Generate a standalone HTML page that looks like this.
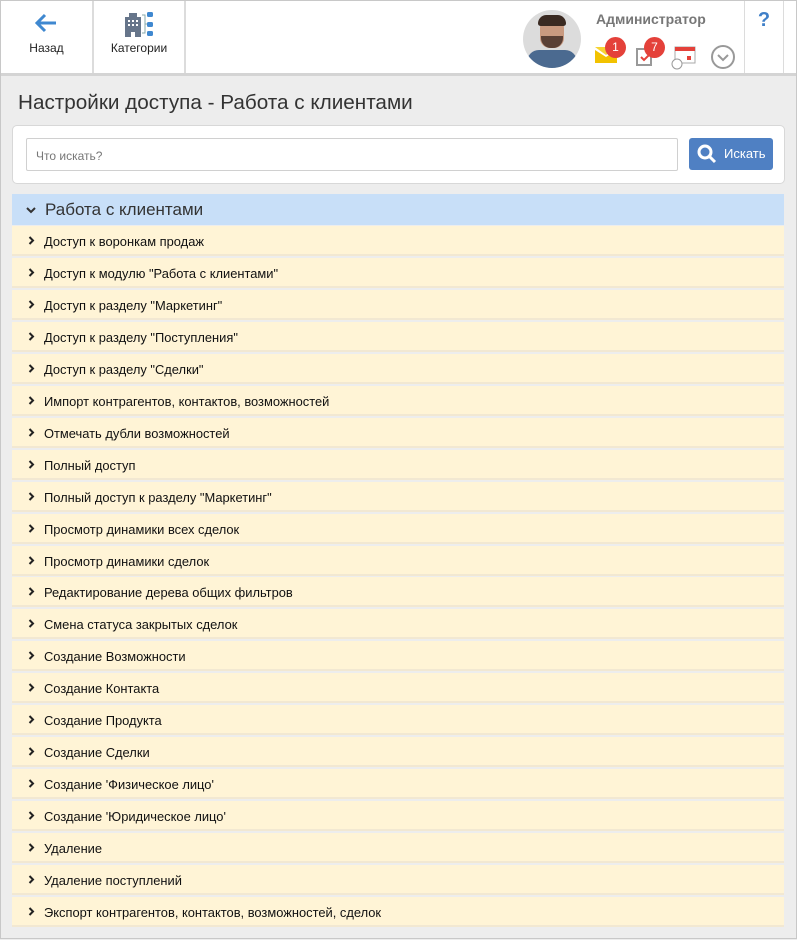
<!DOCTYPE html>
<html><head><meta charset="utf-8"><style>
*{box-sizing:border-box;margin:0;padding:0}
body{width:797px;height:940px;overflow:hidden;background:#ededed;font-family:"Liberation Sans",Arial,sans-serif;position:relative}
.frame{position:absolute;left:0;top:0;width:797px;height:939px;border:1px solid #c8c8c8;}
.top{position:absolute;left:1px;top:1px;width:795px;height:75px;background:#fff;border-bottom:3px solid #d4d4d4}
.cell{position:absolute;top:0;height:72px;border-right:2px solid #dcdcdc;text-align:center;font-size:12px;color:#222}
.title{position:absolute;left:18px;top:91px;font-size:20.7px;color:#333}
.card{position:absolute;left:12px;top:125px;width:773px;height:59px;background:#fff;border:1px solid #d8d8d8;border-radius:5px}
.inp{position:absolute;left:13px;top:12px;width:652px;height:33px;border:1px solid #d0d0d0;border-radius:2px;font-size:12px;color:#777;padding:10px 9px}
.btn{position:absolute;left:676px;top:12px;width:84px;height:32px;background:#4f80c3;border-radius:3px;color:#fff;font-size:13px}
.grp{position:absolute;left:12px;top:194px;width:772px;height:31px;background:#c8dff8;font-size:17px;color:#333;padding:6px 0 0 33px}
.row{position:absolute;left:12px;width:772px;height:30px;background:#fff4d6;border-bottom:2px solid #f2e8d2;font-size:12.9px;color:#111;padding:8px 0 0 32px}
.chev{position:absolute;left:16px;top:10px}
</style></head><body>
<div class="frame"></div>
<div class="top">
 <div class="cell" style="left:0;width:93px">
  <svg style="position:absolute;left:33px;top:12px" width="24" height="20" viewBox="0 0 24 20"><path d="M11 2L3 10l8 8M3 10h19" fill="none" stroke="#3f88d0" stroke-width="3"/></svg>
  <div style="position:absolute;top:40px;width:100%">Назад</div></div>
 <div class="cell" style="left:93px;width:92px">
  <svg style="position:absolute;left:29px;top:10px" width="32" height="26" viewBox="0 0 32 26"><path d="M2 6h4V2h8v4h4v20h-6v-5h-4v5H2z" fill="#66758a"/><g fill="#fff"><rect x="5" y="9" width="2" height="2"/><rect x="9" y="9" width="2" height="2"/><rect x="13" y="9" width="2" height="2"/><rect x="5" y="13" width="2" height="2"/><rect x="9" y="13" width="2" height="2"/><rect x="13" y="13" width="2" height="2"/></g><path d="M19 4h3v18h-3M22 13h4" fill="none" stroke="#8aa" stroke-width="1"/><rect x="24" y="1" width="6" height="5" rx="1.5" fill="#3f88d0"/><rect x="24" y="11" width="6" height="5" rx="1.5" fill="#3f88d0"/><rect x="24" y="20" width="6" height="5" rx="1.5" fill="#3f88d0"/></svg>
  <div style="position:absolute;top:40px;width:100%">Категории</div></div>
 <div style="position:absolute;left:522px;top:9px;width:58px;height:58px;border-radius:50%;background:#dcdcdc;overflow:hidden">
  <div style="position:absolute;left:17px;top:8px;width:24px;height:30px;border-radius:10px;background:#c99a80"></div>
  <div style="position:absolute;left:15px;top:5px;width:28px;height:11px;border-radius:10px 10px 3px 3px;background:#3a2a22"></div>
  <div style="position:absolute;left:18px;top:26px;width:22px;height:12px;border-radius:0 0 10px 10px;background:#5a4035"></div>
  <div style="position:absolute;left:4px;top:40px;width:50px;height:20px;border-radius:12px 12px 0 0;background:#4b6a90"></div></div>
 <div style="position:absolute;left:595px;top:10px;font-size:14px;font-weight:bold;color:#777">Администратор</div>
 <svg style="position:absolute;left:594px;top:46px" width="22" height="16"><path d="M0 3l11 7 11-7v13H0z" fill="#f2c200"/><path d="M0 0h22L11 8z" fill="#f6d433"/></svg>
 <div style="position:absolute;left:604px;top:36px;width:21px;height:21px;border-radius:50%;background:#e4413a;color:#fff;font-size:12px;text-align:center;line-height:21px">1</div>
 <svg style="position:absolute;left:634px;top:46px" width="20" height="20"><path d="M2 2h14v16H2z" fill="none" stroke="#999" stroke-width="2"/><path d="M6 10l3 3 5-5" fill="none" stroke="#e4413a" stroke-width="2"/></svg>
 <div style="position:absolute;left:643px;top:36px;width:21px;height:21px;border-radius:50%;background:#e4413a;color:#fff;font-size:12px;text-align:center;line-height:21px">7</div>
 <svg style="position:absolute;left:670px;top:45px" width="26" height="24"><rect x="4" y="1" width="20" height="16" fill="#fff" stroke="#aaa"/><rect x="4" y="1" width="20" height="4" fill="#e4413a"/><rect x="16" y="10" width="4" height="4" fill="#e4413a"/><circle cx="6" cy="18" r="5" fill="#fff" stroke="#999"/></svg>
 <svg style="position:absolute;left:709px;top:43px" width="26" height="26"><circle cx="13" cy="13" r="11" fill="none" stroke="#999" stroke-width="2"/><path d="M8 11l5 5 5-5" fill="none" stroke="#999" stroke-width="2"/></svg>
 <div style="position:absolute;left:743px;top:0;width:40px;height:72px;border-left:1px solid #dcdcdc;border-right:1px solid #dcdcdc;text-align:center;font-size:20px;font-weight:bold;color:#3f7fc8;padding-top:8px">?</div>
</div>
<div class="title">Настройки доступа - Работа с клиентами</div>
<div class="card"><div class="inp">Что искать?</div>
 <div class="btn"><svg style="position:absolute;left:8px;top:6px" width="20" height="20"><circle cx="8" cy="8" r="6" fill="none" stroke="#fff" stroke-width="3"/><path d="M12 12l6 6" stroke="#fff" stroke-width="3"/></svg><span style="position:absolute;left:35px;top:8px">Искать</span></div></div>
<div class="grp"><svg style="position:absolute;left:14px;top:13px" width="10" height="7"><path d="M1 1l4 4 4-4" fill="none" stroke="#333" stroke-width="2"/></svg>Работа с клиентами</div>
<div id="rows"></div>
<script>
var t=["Доступ к воронкам продаж","Доступ к модулю \"Работа с клиентами\"","Доступ к разделу \"Маркетинг\"","Доступ к разделу \"Поступления\"","Доступ к разделу \"Сделки\"","Импорт контрагентов, контактов, возможностей","Отмечать дубли возможностей","Полный доступ","Полный доступ к разделу \"Маркетинг\"","Просмотр динамики всех сделок","Просмотр динамики сделок","Редактирование дерева общих фильтров","Смена статуса закрытых сделок","Создание Возможности","Создание Контакта","Создание Продукта","Создание Сделки","Создание 'Физическое лицо'","Создание 'Юридическое лицо'","Удаление","Удаление поступлений","Экспорт контрагентов, контактов, возможностей, сделок"];
var h="";t.forEach(function(s,i){h+='<div class="row" style="top:'+(226+i*31.95)+'px"><svg class="chev" width="7" height="9"><path d="M1.5 1l3.5 3.5-3.5 3.5" fill="none" stroke="#222" stroke-width="2"/></svg>'+s.replace(/"/g,'&quot;')+'</div>'});
document.getElementById("rows").innerHTML=h;
</script>
</body></html>
